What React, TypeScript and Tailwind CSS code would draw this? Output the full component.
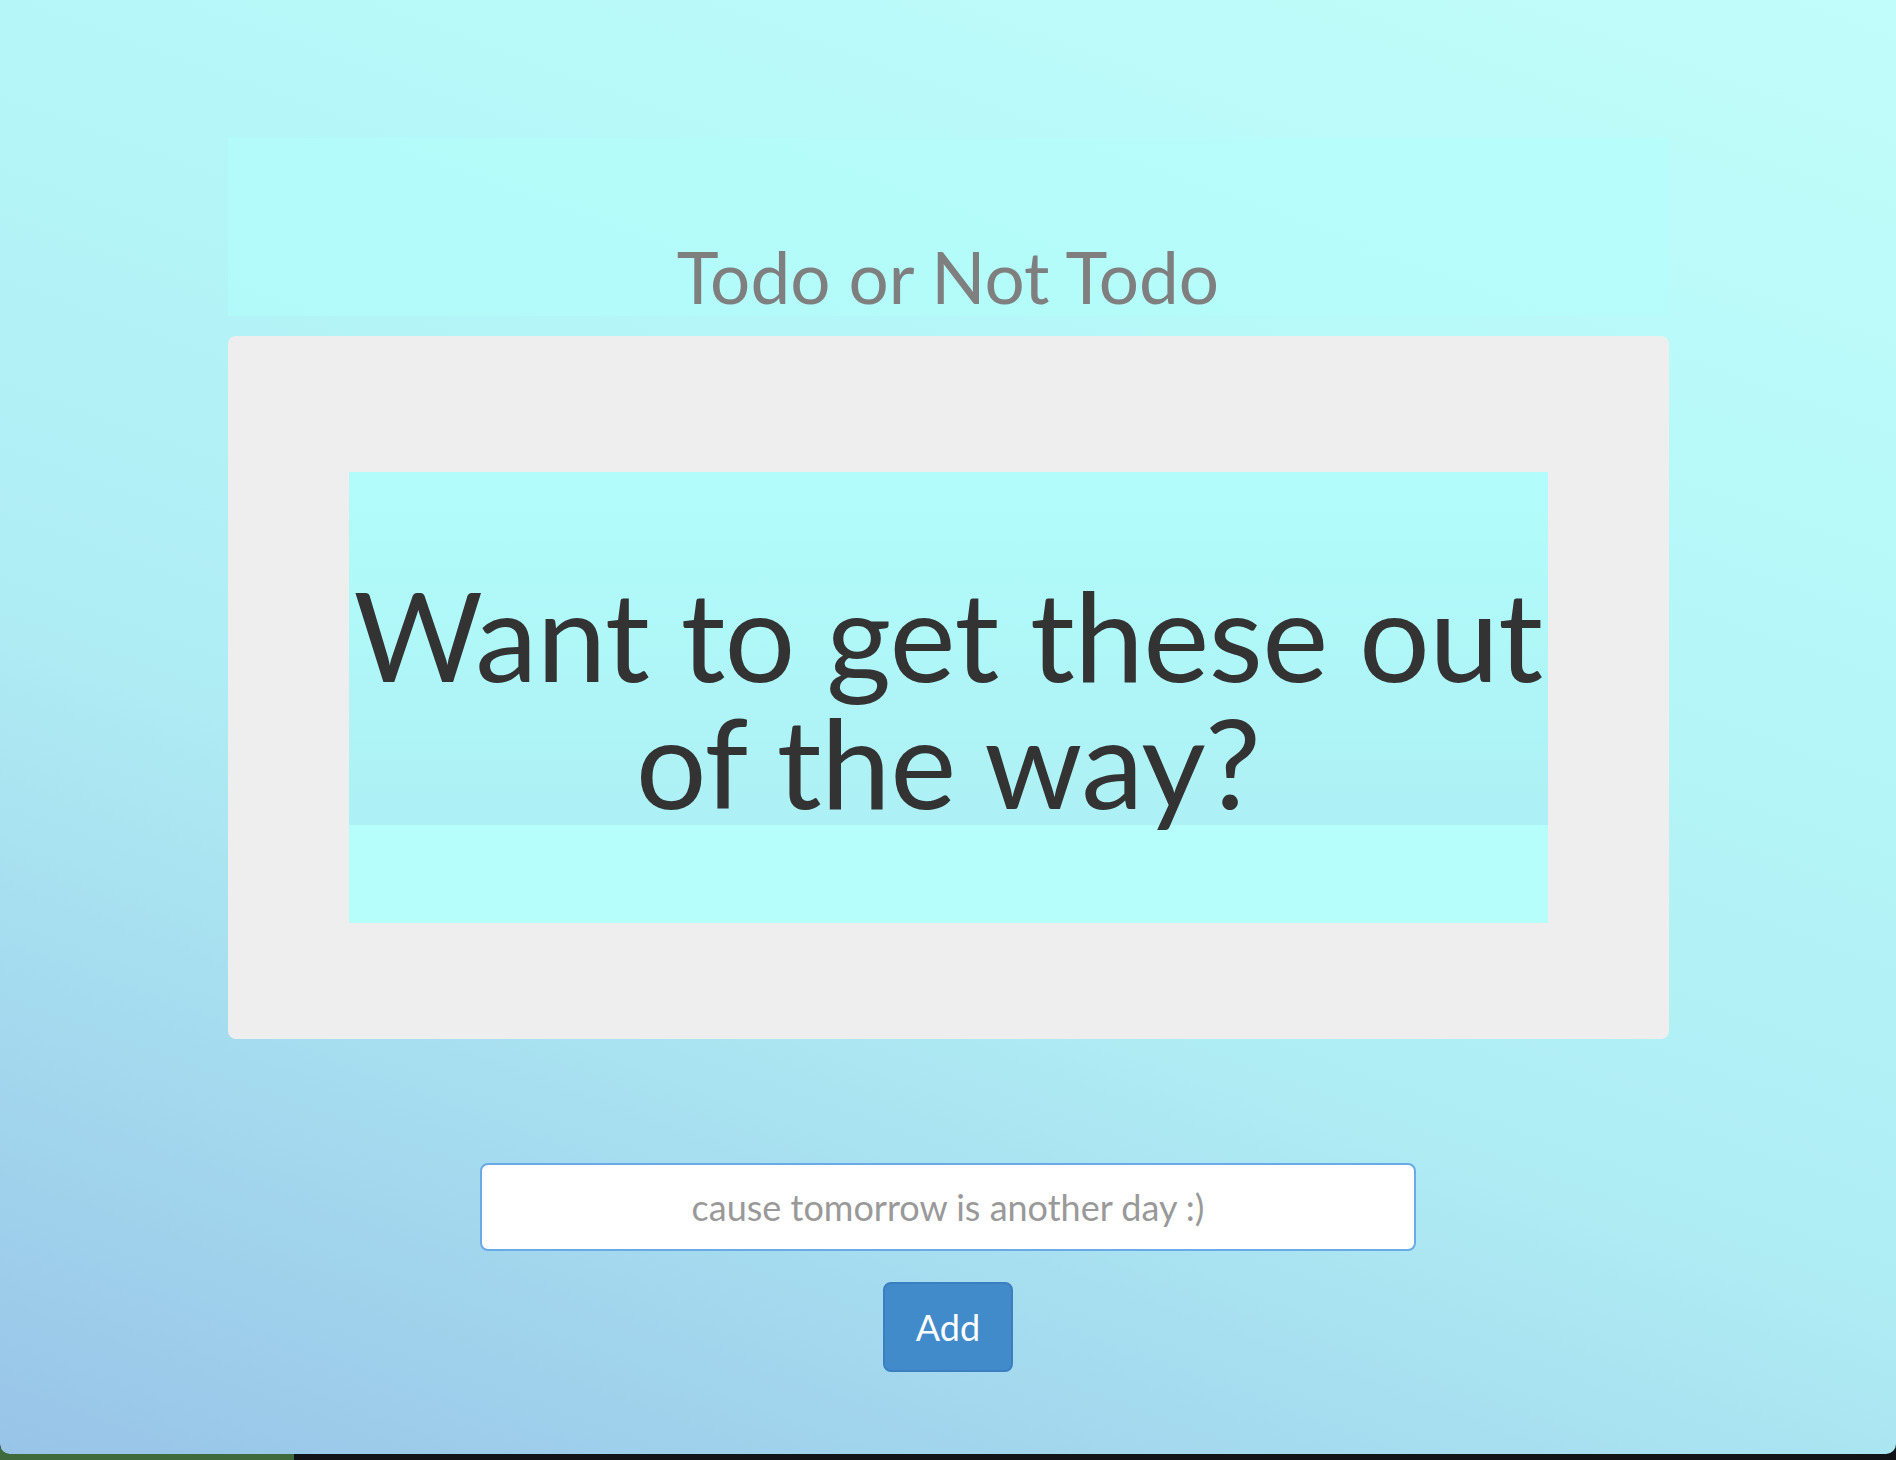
import React from 'react'

const font = { fontFamily: 'Lato, "Open Sans", sans-serif' }

export default function App() {
  return (
    <div className="relative h-[1460px] w-[1896px] overflow-hidden bg-[#111317]" style={font}>
      {/* desktop peeking under the window */}
      <div className="absolute bottom-0 left-0 h-[12px] w-[294px] bg-[#3f6b3c]" />

      <div className="relative h-[1454px] rounded-b-[10px] bg-[linear-gradient(200deg,#c1fdfa_0%,#b6f8f9_30%,#afedf4_60%,#98c4e8_100%)]">
        <div className="flex flex-col items-center pt-[138px]">
          {/* header */}
          <div className="w-[1441px] bg-[#b2fffb]/50 pt-[99px]">
            <h2 className="text-center text-[71px] leading-[79px] font-normal text-[#7f7f7f]">
              Todo or Not Todo
            </h2>
          </div>

          {/* card */}
          <div className="mt-[20px] w-[1441px] rounded-[8px] bg-[#eeeeee] px-[121px] pt-[136px] pb-[116px]">
            <div className="bg-[#b5fefb] pb-[98px]">
              <h1 className="bg-[linear-gradient(to_bottom,#b2fdfb,#adf0f5)] pt-[99px] text-center text-[125px] leading-[127px] tracking-[-0.005em] font-normal text-[#333333]">
                Want to get these out of the way?
              </h1>
            </div>
          </div>

          {/* form */}
          <input
            className="mt-[124px] h-[88px] w-[936px] rounded-[8px] border-2 border-[#6aaae6] bg-white text-center text-[36px] text-[#555] outline-none placeholder:text-[#999999]"
            placeholder="cause tomorrow is another day :)"
          />
          <button className="mt-[31px] h-[90px] w-[130px] rounded-[8px] border-2 border-[#3b7fc0] bg-[#428bca] text-[36px] text-white">
            Add
          </button>
        </div>
      </div>
    </div>
  )
}
